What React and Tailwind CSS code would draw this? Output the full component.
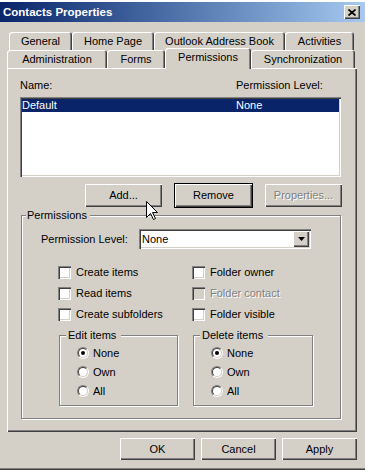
import React from 'react';

const raised = 'shadow-[inset_1px_1px_0_#fff,inset_-1px_-1px_0_#404040,inset_-2px_-2px_0_#808080]';
const sunken = 'shadow-[inset_1px_1px_0_#808080,inset_2px_2px_0_#404040,inset_-1px_-1px_0_#fff,inset_-2px_-2px_0_#d4d0c8]';
const etched = 'border border-[#808080] shadow-[inset_1px_1px_0_#fff,1px_1px_0_#fff]';
const tabEdge = 'shadow-[inset_1px_1px_0_#fff,inset_-1px_0_0_#404040,inset_-2px_0_0_#808080]';

const Tab = ({ label, w, active }) => (
  <div
    className={`${tabEdge} rounded-t-[3px] flex justify-center bg-[#d4d0c8] ${
      active ? 'relative z-10 -mt-[2px] h-[21px] pt-[3px] items-start' : 'h-[18px] items-center'
    }`}
    style={{ width: w }}
  >
    {label}
  </div>
);

const Button = ({ children, isDefault, disabled, w = 'w-[77px]', h = 'h-[23px]' }) => (
  <button
    className={`${w} ${h} bg-[#d4d0c8] ${raised} flex items-center justify-center ${
      isDefault ? 'outline outline-1 outline-black' : ''
    } ${disabled ? 'text-[#808080] [text-shadow:1px_1px_0_#fff]' : 'text-black'}`}
  >
    {children}
  </button>
);

const Check = ({ label, disabled }) => (
  <div className="h-[21px] flex items-center">
    <span className={`w-[13px] h-[13px] ${sunken} ${disabled ? 'bg-[#d4d0c8]' : 'bg-white'}`} />
    <span className={`ml-[5px] ${disabled ? 'text-[#808080] [text-shadow:1px_1px_0_#fff]' : ''}`}>{label}</span>
  </div>
);

const Radio = ({ label, checked }) => (
  <div className="h-[12px] flex items-center">
    <span className="w-[12px] h-[12px] rounded-full border border-t-[#808080] border-l-[#808080] border-b-white border-r-white flex">
      <span className="flex-1 rounded-full border border-t-[#404040] border-l-[#404040] border-b-[#d4d0c8] border-r-[#d4d0c8] bg-white flex items-center justify-center">
        {checked && <span className="w-[4px] h-[4px] rounded-full bg-black" />}
      </span>
    </span>
    <span className="ml-[4px]">{label}</span>
  </div>
);

const SubGroup = ({ title, w }) => (
  <div className={`${etched} ${w} h-[71px] flex flex-col`}>
    <span className="-mt-[7px] ml-[6px] pl-[2px] pr-[5px] w-fit bg-[#d4d0c8]">{title}</span>
    <div className="mt-[5px] pl-[17px] flex flex-col gap-[7px]">
      <Radio label="None" checked />
      <Radio label="Own" />
      <Radio label="All" />
    </div>
  </div>
);

export default function App() {
  return (
    <div className="relative w-[365px] h-[471px] overflow-hidden bg-white font-['Liberation_Sans',Arial,sans-serif] text-[11px] leading-[13px] text-black">
      <div className="h-[2px]" />
      <div className="h-[468px] flex flex-col bg-[#d4d0c8] shadow-[inset_0_-1px_0_#404040,inset_0_-2px_0_#808080]">
        {/* title bar */}
        <div className="h-[20px] flex items-center justify-between pl-[3px] pr-[5px] bg-linear-to-r from-[#0a246a] to-[#a6caf0]">
          <span className="text-white font-bold text-[11.5px]">Contacts Properties</span>
          <span className={`w-[16px] h-[14px] bg-[#d4d0c8] ${raised} flex items-center justify-center`}>
            <svg width="8" height="7" viewBox="0 0 8 7">
              <path d="M0.5 0.5 L7.5 6.5 M7.5 0.5 L0.5 6.5" stroke="black" strokeWidth="1.7" />
            </svg>
          </span>
        </div>

        {/* tabs */}
        <div className="pt-[10px] flex flex-col">
          <div className="flex pl-[9px] h-[18px]">
            <Tab label="General" w={63} />
            <Tab label="Home Page" w={82} />
            <Tab label="Outlook Address Book" w={131} />
            <Tab label="Activities" w={69} />
          </div>
          <div className="flex pl-[7px] h-[18px]">
            <Tab label="Administration" w={100} />
            <Tab label="Forms" w={58} />
            <Tab label="Permissions" w={86} active />
            <Tab label="Synchronization" w={104} />
          </div>
        </div>

        {/* tab panel */}
        <div className={`mx-[7px] w-[350px] h-[364px] flex flex-col ${raised}`}>
          <div className="pt-[11px] pl-[13px] flex">
            <span className="w-[216px]">Name:</span>
            <span>Permission Level:</span>
          </div>
          <div className={`mt-[5px] ml-[13px] w-[321px] h-[80px] bg-white p-[2px] ${sunken}`}>
            <div className="h-[13px] bg-[#0a246a] text-white flex">
              <span className="w-[214px]">Default</span>
              <span>None</span>
            </div>
          </div>
          <div className="mt-[7px] pl-[78px] flex gap-[13px]">
            <Button>Add...</Button>
            <Button isDefault>Remove</Button>
            <Button disabled>Properties...</Button>
          </div>

          {/* permissions group */}
          <div className={`mt-[8px] ml-[14px] w-[320px] h-[204px] flex flex-col ${etched}`}>
            <span className="-mt-[7px] ml-[4px] pl-[1px] pr-[3px] w-fit bg-[#d4d0c8]">Permissions</span>
            <div className="mt-[7px] pl-[19px] flex items-center h-[20px]">
              <span className="w-[98px]">Permission Level:</span>
              <div className={`w-[172px] h-[20px] bg-white p-[2px] flex items-center ${sunken}`}>
                <span className="flex-1 pl-[1px]">None</span>
                <span className={`w-[16px] h-[16px] bg-[#d4d0c8] ${raised} flex items-center justify-center`}>
                  <svg width="7" height="4" viewBox="0 0 7 4">
                    <polygon points="0,0 7,0 3.5,4" fill="black" />
                  </svg>
                </span>
              </div>
            </div>
            <div className="mt-[13px] pl-[36px] flex">
              <div className="w-[134px] flex flex-col">
                <Check label="Create items" />
                <Check label="Read items" />
                <Check label="Create subfolders" />
              </div>
              <div className="flex flex-col">
                <Check label="Folder owner" />
                <Check label="Folder contact" disabled />
                <Check label="Folder visible" />
              </div>
            </div>
            <div className="mt-[10px] pl-[37px] flex gap-[15px]">
              <SubGroup title="Edit items" w="w-[119px]" />
              <SubGroup title="Delete items" w="w-[120px]" />
            </div>
          </div>
        </div>

        {/* dialog buttons */}
        <div className="mt-[6px] pr-[8px] flex justify-end gap-[6px]">
          <Button w="w-[75px]" h="h-[22px]">OK</Button>
          <Button w="w-[75px]" h="h-[22px]">Cancel</Button>
          <Button w="w-[75px]" h="h-[22px]">Apply</Button>
        </div>
      </div>

      {/* mouse pointer */}
      <svg className="absolute left-[146px] top-[201px]" width="13" height="20" viewBox="0 0 13 20">
        <path d="M0.5 0.5 L0.5 16.5 L4.5 12.5 L7.5 18.5 L9.5 17.5 L6.5 11.5 L11.5 11.5 Z" fill="white" stroke="black" strokeWidth="1" />
      </svg>
    </div>
  );
}
